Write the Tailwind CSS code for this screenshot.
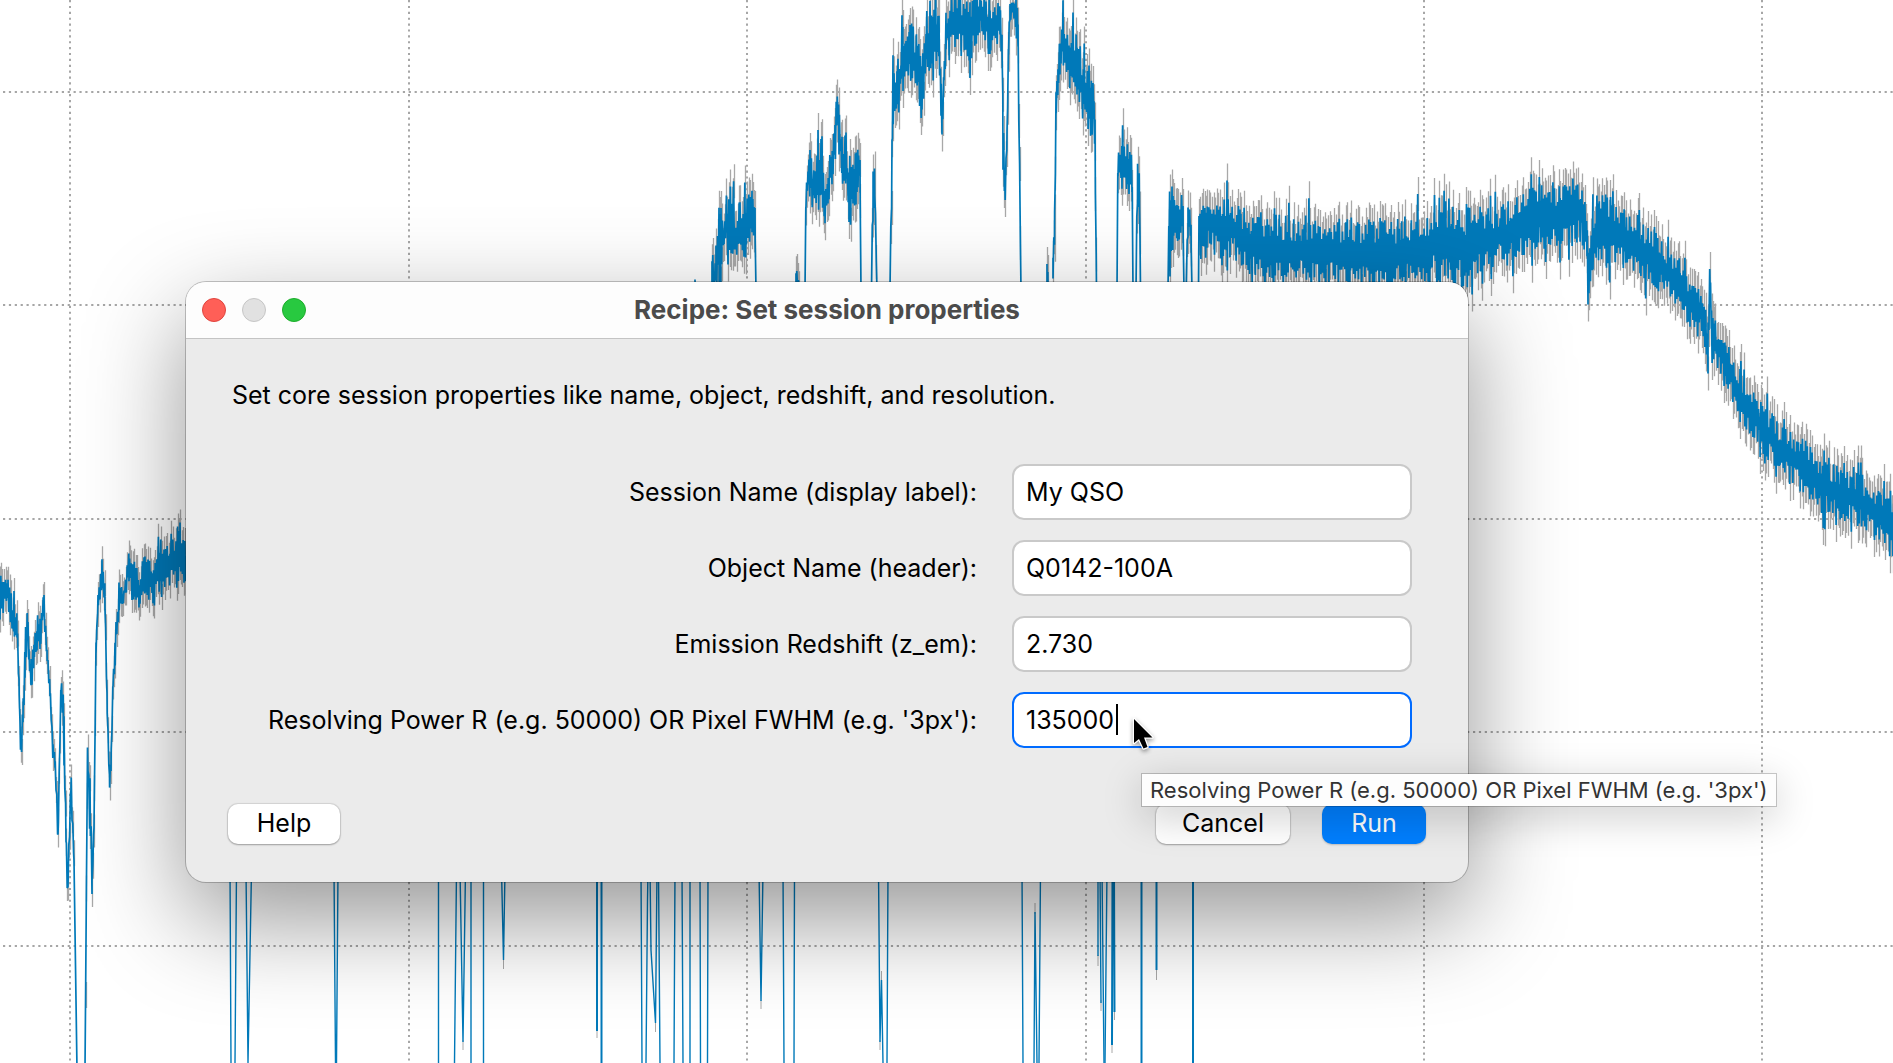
<!DOCTYPE html>
<html lang="en" class="h-full">
<head>
    <meta charset="UTF-8">
    <meta name="viewport" content="width=device-width, initial-scale=1.0">
    <title>Recipe: Set session properties</title>
    <script src="https://cdn.jsdelivr.net/npm/@tailwindcss/browser@4"></script>
</head>
<body class="relative h-full overflow-hidden bg-white font-['Inter','Liberation_Sans',sans-serif] text-black">
    <!-- Spectrum plot -->
    <svg class="absolute inset-0 h-full w-full" viewBox="0 0 1893 1063" preserveAspectRatio="none" fill="none" aria-hidden="true">
        <g stroke="#a6a6a6" stroke-width="2" stroke-dasharray="2.200 3.680">
            <path d="M70 0V1063M409 0V1063M747 0V1063M1086 0V1063M1424 0V1063M1762 0V1063"/>
            <path d="M3 92H1893M3 305H1893M3 519H1893M3 732H1893M3 946H1893"/>
        </g>
        <path id="errors" stroke="#a8a8a8" stroke-width="1.300"/>
        <path id="flux" stroke="#0079b9" stroke-width="1.700" stroke-linejoin="bevel"/>
        <!-- absorption lines below the dialog -->
        <g stroke="#a8a8a8" stroke-width="1">
            <path d="M463 1040V1050M503.500 955V969M597 1030V1038M655.500 1020V1032M761 1000V1009M880 1040V1050M881.500 971V982M1035 903V914M1098 955V966M1101 1000V1011M1112 1044V1053M1114.500 1010V1020M1156.500 968V980"/>
        </g>
        <g stroke="#0079b9" stroke-width="1.400">
            <path d="M230 870L231 1063M236.500 870L235 1063M246 870L248 1063L251.500 870M334 870L335.500 1063M338 870L336.500 1063M438.500 870V1063M456.500 870L454.500 1063M460 870L463 1042L465.500 870M471 870V1063M483.500 870V1063M501.500 870L503.500 960L505 870"/>
            <path d="M641 870L642 1063M648 870L647.500 900L646 1063M650 870L651 950L655.500 1023L657 870M658.500 870L660 1063M675 870L674 1063M682 870L683 1063M690 870V1063M700 870L700.500 1063M708 870L707.500 1063M759 870L761 1001L763 870M783 870L784 1063M794.500 870L794 1063M878.500 870L880 1042L881.500 980L883 1063M888 870L887 1063M1022 870L1023 1063M1034 1063L1035 912L1037 1063M1040.500 870L1039 1063M1107 870L1105 1063"/>
            <path d="M1098 870V956M1100 870L1101 1003M1102 870L1104 1063"/>
        </g>
        <g stroke="#0079b9" stroke-width="2">
            <path d="M597 870V1031M601.500 870V1063M1112.500 870L1112 1045M1114 870L1114.500 1012M1141.500 870V1063M1156.500 870V970M1193 870V1063"/>
        </g>
    </svg>

    <!-- Dialog -->
    <main class="absolute left-[186px] top-[282px] w-[1282px] max-w-full rounded-[20px] bg-[#ebebeb] shadow-[0_0_0_1px_rgba(0,0,0,0.22),0_36px_100px_rgba(0,0,0,0.42)]">
        <header class="relative flex h-[57px] items-center justify-center rounded-t-[20px] border-b border-[#c4c4c4] bg-[#fdfdfd]">
            <div class="absolute left-4 flex gap-4">
                <button type="button" aria-label="Close" class="size-6 rounded-full border border-[#e0443e] bg-[#ff5f57]"></button>
                <button type="button" aria-label="Minimize" class="size-6 rounded-full border border-[#c6c6c6] bg-[#e1e1e1]" disabled></button>
                <button type="button" aria-label="Zoom" class="size-6 rounded-full border border-[#1dad2b] bg-[#28c940]"></button>
            </div>
            <h1 class="text-[26px] leading-8 font-bold text-[#4b4b4b]">Recipe: Set session properties</h1>
        </header>

        <form class="px-[42px] pt-10 pb-[38px]">
            <p class="px-1 text-[25px] leading-8">Set core session properties like name, object, redshift, and resolution.</p>

            <div class="mt-[53px] mr-[14px] grid grid-cols-[1fr_400px] items-center gap-x-[35px] gap-y-5 text-[25px] leading-8">
                <label for="sessionName" class="text-right">Session Name (display label):</label>
                <input id="sessionName" type="text" value="My QSO" class="h-14 w-full rounded-xl border-2 border-[#c9c9c9] bg-white px-3 outline-none">

                <label for="objectName" class="text-right">Object Name (header):</label>
                <input id="objectName" type="text" value="Q0142-100A" class="h-14 w-full rounded-xl border-2 border-[#c9c9c9] bg-white px-3 outline-none">

                <label for="redshift" class="text-right">Emission Redshift (z_em):</label>
                <input id="redshift" type="text" value="2.730" class="h-14 w-full rounded-xl border-2 border-[#c9c9c9] bg-white px-3 outline-none">

                <label for="resolution" class="text-right">Resolving Power R (e.g. 50000) OR Pixel FWHM (e.g. '3px'):</label>
                <div class="relative">
                    <input id="resolution" type="text" value="135000" class="block h-14 w-full rounded-xl border-2 border-[#006bff] bg-white px-3 caret-transparent outline-none">
                    <span class="absolute top-3 left-[104px] h-[31px] w-0.5 bg-black"></span>
                </div>
            </div>

            <div class="mt-14 flex items-center text-[25px] leading-8">
                <button type="button" class="h-10 w-28 rounded-[10px] bg-white pb-0.5 shadow-[0_0_1px_1px_rgba(0,0,0,0.1),0_1px_2px_rgba(0,0,0,0.25)]">Help</button>
                <button type="button" class="ml-auto h-10 w-[134px] rounded-[10px] bg-white pb-0.5 shadow-[0_0_1px_1px_rgba(0,0,0,0.1),0_1px_2px_rgba(0,0,0,0.25)]">Cancel</button>
                <button type="submit" class="ml-8 h-10 w-[104px] rounded-[10px] bg-[#007fff] pb-0.5 text-white shadow-[0_1px_2px_rgba(0,0,0,0.2)]">Run</button>
            </div>
        </form>
    </main>

    <!-- Tooltip -->
    <div role="tooltip" class="absolute left-[1142px] top-[774px] bg-[#fdfdfd] px-2 text-[22px] leading-8 whitespace-nowrap text-[#333] shadow-[0_0_0_1px_rgba(0,0,0,0.2),0_10px_40px_rgba(0,0,0,0.22)]">Resolving Power R (e.g. 50000) OR Pixel FWHM (e.g. '3px')</div>

    <!-- Pointer -->
    <svg class="absolute left-[1130px] top-[714px] drop-shadow-[0_2px_2px_rgba(0,0,0,0.4)]" width="28" height="42" viewBox="0 0 28 42" aria-hidden="true">
        <path d="M4 5V29L9 25L13.500 34.500L17.500 33L14 23.500H22.500Z" fill="#000" stroke="#fff" stroke-width="2.500" stroke-linejoin="round" paint-order="stroke"/>
    </svg>
</body>
<script>
    // Each row is [x, top, bottom] of the flux band; rows with top == bottom are bare line
    const segments = [
        [[0,568,616],[8,574,610],[14,600,645],[17,611,644],[19,680,690],[20.5,740,753],[23,690,740],[25,640,680],[27.5,608,640],[29,640,670],[31,660,696],[34,640,665],[37,620,655],[40,615,650],[44,588,620],[47,645,665],[50,680,705],[53,735,765],[55,750,770],[58,830,845],[61,678,690],[64,700,760],[66,820,840],[67.5,890,908],[71,768,800],[74,860,862],[77,1070,1070],[85,1070,1070],[87.5,741,760],[90,770,850],[92,880,898],[94,820,830],[96,640,660],[98,590,610],[102,553,590],[105,590,615],[107,690,710],[109.5,770,796],[111,755,770],[113,680,690],[115,640,670],[119,575,620],[123,590,608],[129,547,584],[136,560,604],[139,572,614],[145,550,594],[153,556,610],[160,546,592],[170,540,586],[180,528,582],[188,545,605]],
        [[695,279,281],[695.5,290,292]],
        [[712,248,290],[714,265,295],[716,235,290],[719,214,285],[721,198,290],[724,225,250],[727,198,250],[733,195,270],[733.4,162,200],[735,210,265],[740,200,265],[746,194,265],[752,183,235],[754,190,238],[755,203,240],[756,290,290]],
        [[796,268,290],[799,275,292]],
        [[805,290,290],[806,188,210],[808,160,195],[810,143,200],[813,175,205],[818,140,198],[822,148,205],[825,195,230],[828,165,205],[832,135,185],[835,115,175],[837.3,83,120],[839,108,155],[842,135,190],[846,130,190],[849,170,240],[853,155,210],[856,150,210],[858,145,180],[860,160,190],[861,290,290]],
        [[871.500,290,290],[873,156,225],[874.500,160,200],[877,290,290]],
        [[890,290,290],[892,125,190],[893,62,115],[897,55,130],[901,48,95],[902,4,60],[903,45,85],[905,40,90],[910,20,80],[918,32,108],[922,60,122],[926,22,78],[932,0,75],[937,6,60],[939,20,70],[941,80,110],[942,120,139],[944,60,90],[946,5,60],[955,-10,50],[970,-5,68],[980,-10,35],[990,0,58],[1000,-5,40],[1002,30,60],[1003,110,160],[1005,180,207],[1007,120,150],[1008.500,40,60],[1010,-5,20],[1016,-10,30],[1018,10,60],[1021,290,290]],
        [[1047,248,292],[1048,270,292]],
        [[1053,250,290],[1054.500,210,265],[1056,90,120],[1058,60,90],[1060,35,80],[1063,13,65],[1070,20,95],[1077,36,98],[1084,58,125],[1090,75,138],[1094,80,138],[1095,110,150],[1096.500,290,290]],
        [[1117,290,290],[1118,140,190],[1122,133,198],[1128,136,198],[1132,148,202],[1133,290,290]],
        [[1136,290,290],[1137.500,150,210],[1139.500,175,220],[1140.500,290,290]],
        [[1168,290,290],[1169,190,250],[1170,168,262],[1173,187,240],[1177,200,242],[1183,190,242],[1184,290,290],[1186,290,290],[1188,194,240],[1191,217,240],[1192,290,290]],
        [[1198.500,290,290],[1199,210,250],[1207,198,250],[1222,198,252],[1227,198,275],[1230,192,260],[1240,205,265],[1250,206,285],[1270,214,284],[1300,215,286],[1350,217,292],[1400,217,292],[1430,208,284],[1450,205,284],[1466,203,292],[1475,204,275],[1490,208,268],[1510,197,268],[1540,182,252],[1560,182,248],[1582,176,246],[1587,200,270],[1588,240,306],[1593,202,285],[1598,190,268],[1612,197,268],[1625,207,272],[1640,215,280],[1660,237,295],[1680,259,308],[1690,278,328],[1700,290,328],[1708,315,375],[1710,248,300],[1711.500,310,350],[1714,328,364],[1725,335,380],[1740,368,425],[1760,397,450],[1780,422,477],[1800,432,494],[1820,456,514],[1840,467,520],[1860,472,530],[1880,487,545],[1894,502,563]]
    ];

    let seed = 12;
    function random() {
        seed = (1664525 * seed + 1013904223) % 2**32;
        return seed / 2**32;
    }

    function band(rows, x) {
        let i = 1;
        while (i < rows.length - 1 && rows[i][0] < x) i++;
        const [x0, t0, b0] = rows[i - 1];
        const [x1, t1, b1] = rows[i];
        const k = (x - x0) / (x1 - x0);
        return [t0 + (t1 - t0) * k, b0 + (b1 - b0) * k];
    }

    let flux = '';
    let errors = '';
    for (const rows of segments) {
        // keep the control rows themselves so that narrow peaks are not skipped
        const xs = rows.map(row => row[0]);
        for (let x = rows[0][0]; x < rows[rows.length - 1][0]; x += 0.8) xs.push(x);
        xs.sort((a, b) => a - b);

        xs.forEach((x, i) => {
            const [top, bottom] = band(rows, x);
            const half = (bottom - top) / 2;
            const reach = half * (random() < 0.08 ? 1.1 + random() * 0.4 : 0.25 + random() * 0.75);
            const y = (top + bottom) / 2 + (i % 2 ? reach : -reach);
            flux += (i ? 'L' : 'M') + x.toFixed(1) + ' ' + y.toFixed(1);
            if (half > 1) {
                const err = x < 200 ? 13 : 17;
                errors += 'M' + Math.round(x) + '.5 ' + (y - err).toFixed(1) + 'v' + 2 * err;
            }
        });
    }
    document.getElementById('flux').setAttribute('d', flux);
    document.getElementById('errors').setAttribute('d', errors);
</script>
</html>
